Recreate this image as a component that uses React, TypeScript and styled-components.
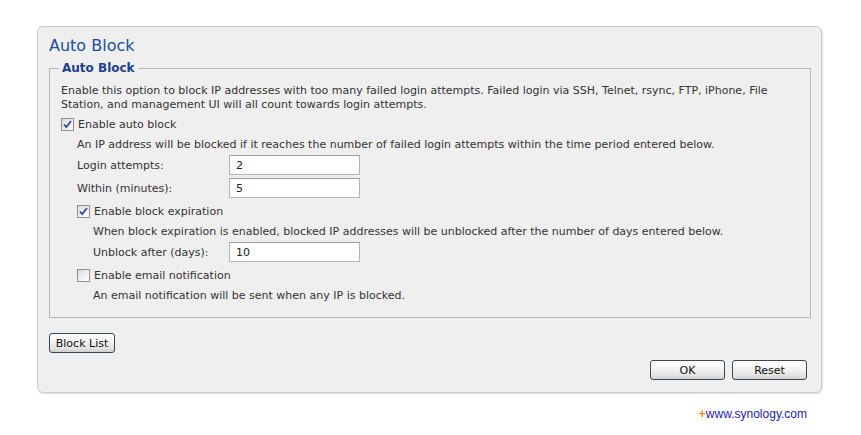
import styled, { createGlobalStyle } from 'styled-components';

const GlobalStyle = createGlobalStyle`
  html, body {
    margin: 0;
    padding: 0;
    background: #ffffff;
  }
  body {
    font-family: "DejaVu Sans", Tahoma, Verdana, sans-serif;
    font-size: 11px;
    color: #333333;
  }
`;

const Page = styled.div`
  padding: 26px 0 0 37px;
  width: 785px;
`;

const Panel = styled.div`
  box-sizing: border-box;
  width: 785px;
  height: 367px;
  background: #efefef;
  border: 1px solid #cbcbcb;
  border-radius: 6px;
  box-shadow: 1px 1px 2px rgba(0, 0, 0, 0.12);
  padding: 9px 10px 0 11px;
  display: flex;
  flex-direction: column;
`;

const Title = styled.h1`
  margin: 0;
  font-size: 16px;
  line-height: 20px;
  font-weight: normal;
  color: #1d4d9d;
`;

const Group = styled.fieldset`
  margin: 5px 0 0 0;
  padding: 9px 0 12px 11px;
  border: 1px solid #b8b8b8;
  border-radius: 0;
`;

const Legend = styled.legend`
  margin-left: -2px;
  padding: 0 3px;
  font-size: 12px;
  line-height: 14px;
  font-weight: bold;
  color: #1c3f8e;
`;

const Description = styled.p`
  margin: 0 0 2px 0;
  line-height: 14px;
`;

const Row = styled.div<{ indent?: number; spaced?: boolean }>`
  display: flex;
  align-items: center;
  height: 20px;
  padding-left: ${p => p.indent ?? 0}px;
  margin-top: ${p => (p.spaced ? 1 : 0)}px;
  margin-bottom: ${p => (p.spaced ? 3 : 0)}px;
  white-space: nowrap;
`;

const Label = styled.span<{ width: number }>`
  width: ${p => p.width}px;
  flex-shrink: 0;
`;

const TextInput = styled.input`
  box-sizing: border-box;
  width: 131px;
  height: 20px;
  border: 1px solid #b4b4b4;
  border-top-color: #9c9c9c;
  background: #ffffff;
  padding: 0 6px;
  font-family: inherit;
  font-size: 11px;
  color: #222;
  outline: none;
`;

const CheckLabel = styled.label`
  display: flex;
  align-items: center;
  gap: 4px;
  cursor: default;
`;

const Box = styled.span`
  box-sizing: border-box;
  width: 13px;
  height: 13px;
  border: 1px solid #8e8f8f;
  background: linear-gradient(135deg, #dcdcdc 0%, #f6f6f6 70%, #ffffff 100%);
  display: flex;
  align-items: center;
  justify-content: center;
`;

const Footer = styled.div`
  display: flex;
  flex-direction: column;
  margin-top: 15px;
`;

const Actions = styled.div`
  display: flex;
  justify-content: flex-end;
  gap: 7px;
  margin-top: 7px;
  padding-right: 4px;
`;

const Button = styled.button<{ width: number }>`
  box-sizing: border-box;
  width: ${p => p.width}px;
  height: 20px;
  padding: 0;
  border: 1px solid #3b4756;
  border-radius: 3px;
  background: linear-gradient(to bottom, #ffffff 0%, #f3f3f3 45%, #e2e2e2 80%, #cfcfcf 100%);
  font-family: inherit;
  font-size: 11px;
  color: #111;
  cursor: pointer;
`;

const LinkLine = styled.div`
  width: 785px;
  padding-right: 15px;
  box-sizing: border-box;
  margin-top: 14px;
  text-align: right;
  font-family: "Liberation Sans", Arial, sans-serif;
  font-size: 12px;
`;

const Plus = styled.span`
  color: #e88a1a;
  font-weight: bold;
`;

const Link = styled.a`
  color: #2323b0;
  text-decoration: none;
`;

function Checkbox({ checked, label }: { checked: boolean; label: string }) {
  return (
    <CheckLabel>
      <Box>
        {checked && (
          <svg width="9" height="9" viewBox="0 0 9 9">
            <path d="M1 4.5 L3.3 7 L8 1" fill="none" stroke="#2b4aa8" strokeWidth="1.8" />
          </svg>
        )}
      </Box>
      {label}
    </CheckLabel>
  );
}

export default function App() {
  return (
    <>
      <GlobalStyle />
      <Page>
        <Panel>
          <Title>Auto Block</Title>
          <Group>
            <Legend>Auto Block</Legend>
            <Description>
              Enable this option to block IP addresses with too many failed login attempts. Failed login via SSH, Telnet, rsync, FTP, iPhone, File
              <br />
              Station, and management UI will all count towards login attempts.
            </Description>
            <Row>
              <Checkbox checked label="Enable auto block" />
            </Row>
            <Row indent={16}>An IP address will be blocked if it reaches the number of failed login attempts within the time period entered below.</Row>
            <Row indent={16} spaced>
              <Label width={152}>Login attempts:</Label>
              <TextInput defaultValue="2" />
            </Row>
            <Row indent={16} spaced>
              <Label width={152}>Within (minutes):</Label>
              <TextInput defaultValue="5" />
            </Row>
            <Row indent={16}>
              <Checkbox checked label="Enable block expiration" />
            </Row>
            <Row indent={32}>When block expiration is enabled, blocked IP addresses will be unblocked after the number of days entered below.</Row>
            <Row indent={32} spaced>
              <Label width={136}>Unblock after (days):</Label>
              <TextInput defaultValue="10" />
            </Row>
            <Row indent={16}>
              <Checkbox checked={false} label="Enable email notification" />
            </Row>
            <Row indent={32}>An email notification will be sent when any IP is blocked.</Row>
          </Group>
          <Footer>
            <div>
              <Button width={66}>Block List</Button>
            </div>
            <Actions>
              <Button width={75}>OK</Button>
              <Button width={75}>Reset</Button>
            </Actions>
          </Footer>
        </Panel>
        <LinkLine>
          <Plus>+</Plus>
          <Link href="#">www.synology.com</Link>
        </LinkLine>
      </Page>
    </>
  );
}
